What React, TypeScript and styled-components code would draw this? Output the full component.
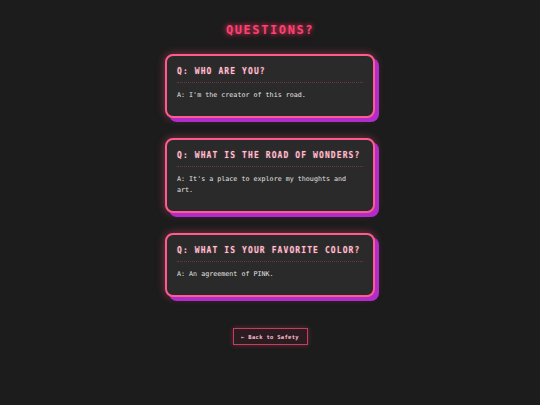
import React from "react";
import styled, { createGlobalStyle } from "styled-components";

const GlobalStyle = createGlobalStyle`
  html, body {
    margin: 0;
    padding: 0;
    background: #1c1c1c;
  }
  body {
    font-family: "DejaVu Sans Mono", "Liberation Mono", monospace;
  }
`;

const Page = styled.main`
  min-height: 405px;
  display: flex;
  flex-direction: column;
  align-items: center;
  padding-top: 22px;
  box-sizing: border-box;
`;

const Title = styled.h1`
  margin: 0 0 16px;
  font-size: 12px;
  line-height: 16px;
  font-weight: bold;
  letter-spacing: 1.6px;
  color: #ff4070;
  text-shadow: 0 0 4px rgba(255, 60, 110, 0.8), 0 0 8px rgba(255, 60, 110, 0.4);
`;

const List = styled.section`
  display: flex;
  flex-direction: column;
  gap: 20px;
`;

const Card = styled.article`
  width: 210px;
  box-sizing: border-box;
  padding: 10px 10px 15px;
  background: #2a2a2a;
  border: 2px solid #ff5c8d;
  border-radius: 8px;
  box-shadow: 4px 4px 0 #b12ccb, 0 0 8px rgba(255, 80, 130, 0.45);
`;

const Question = styled.h2`
  margin: 0;
  font-size: 8px;
  line-height: 12px;
  font-weight: bold;
  letter-spacing: 1.1px;
  color: #ffc0d0;
  text-shadow: 0 0 2px rgba(255, 120, 160, 0.4);
`;

const Divider = styled.hr`
  margin: 4px 0 0;
  border: none;
  border-top: 1px dotted #6e3646;
  height: 0;
`;

const Answer = styled.p`
  margin: 7px 0 0;
  font-size: 6.7px;
  line-height: 11px;
  color: #e2e2e2;
`;

const BackButton = styled.button`
  margin-top: 31px;
  width: 75px;
  height: 17px;
  padding: 0;
  background: #2a1c21;
  border: 1px solid #c0405e;
  color: #ffc0d0;
  font-family: "DejaVu Sans Mono", "Liberation Mono", monospace;
  font-size: 5.5px;
  font-weight: bold;
  letter-spacing: 0.3px;
  box-shadow: 0 0 5px rgba(255, 60, 110, 0.35);
  cursor: pointer;
`;

const faqs = [
  { q: "Q: WHO ARE YOU?", a: "A: I'm the creator of this road." },
  {
    q: "Q: WHAT IS THE ROAD OF WONDERS?",
    a: "A: It's a place to explore my thoughts and art.",
  },
  { q: "Q: WHAT IS YOUR FAVORITE COLOR?", a: "A: An agreement of PINK." },
];

export default function App() {
  return (
    <>
      <GlobalStyle />
      <Page>
        <Title>QUESTIONS?</Title>
        <List>
          {faqs.map((item) => (
            <Card key={item.q}>
              <Question>{item.q}</Question>
              <Divider />
              <Answer>{item.a}</Answer>
            </Card>
          ))}
        </List>
        <BackButton>← Back to Safety</BackButton>
      </Page>
    </>
  );
}
